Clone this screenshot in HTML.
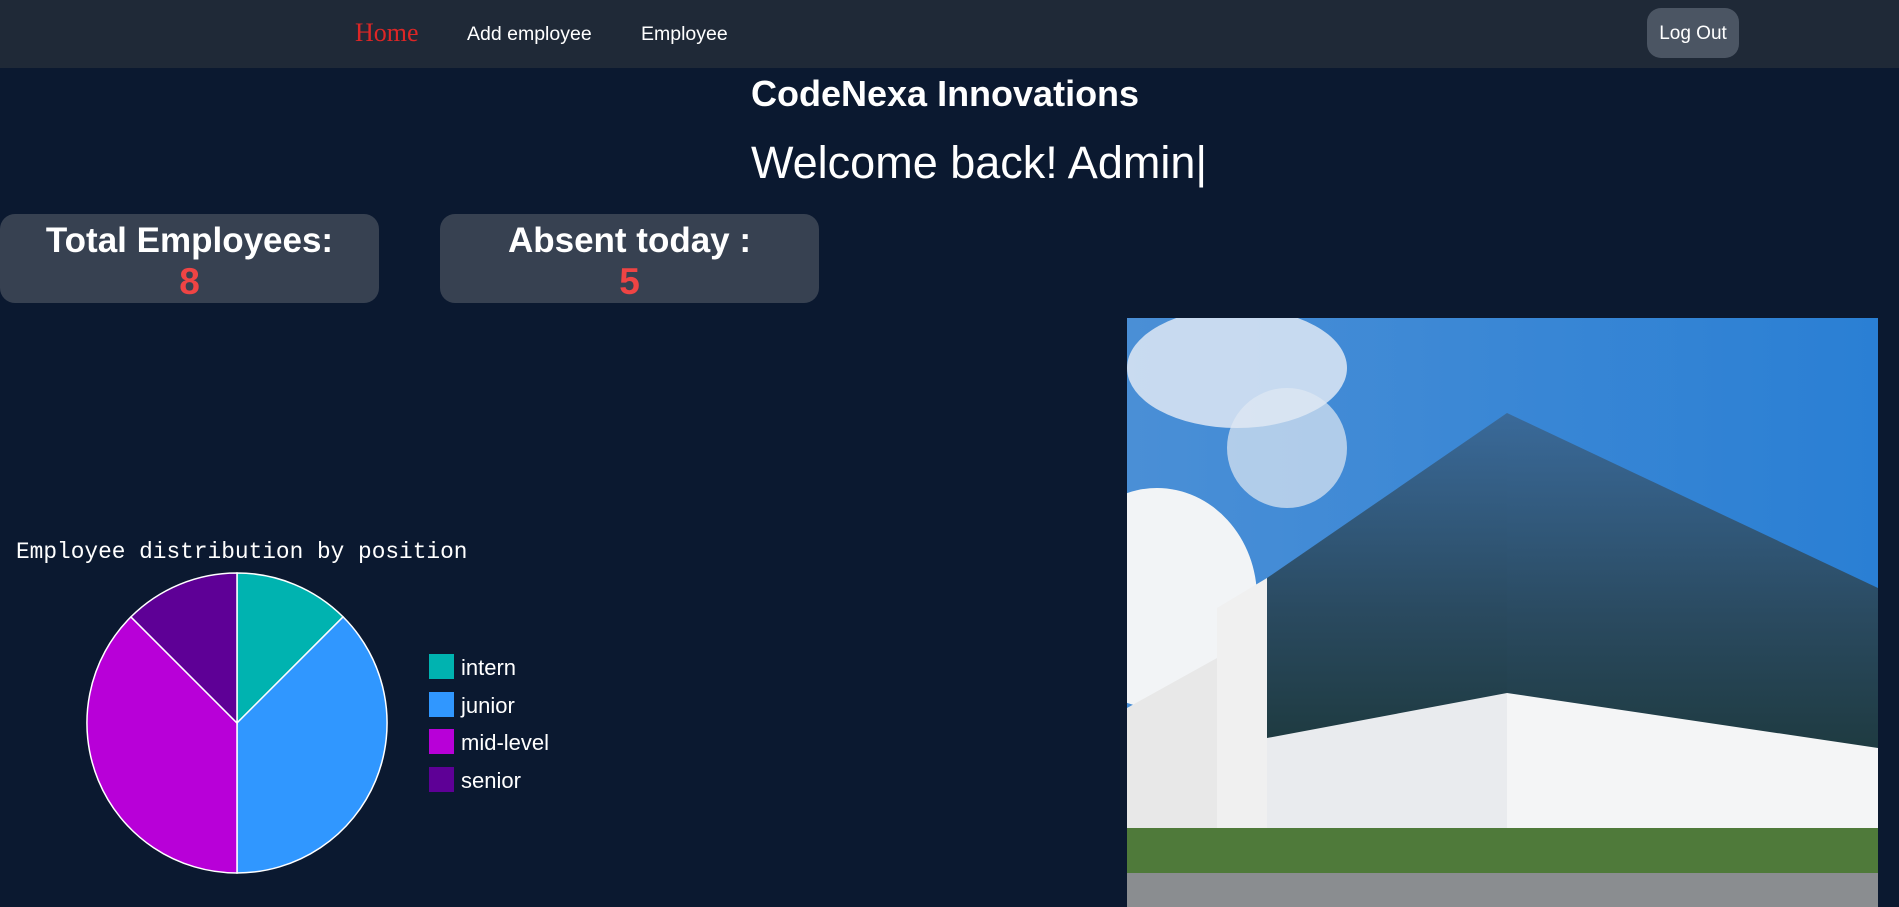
<!DOCTYPE html>
<html><head><meta charset="utf-8"><style>
*{margin:0;padding:0;box-sizing:border-box}
body{width:1899px;height:907px;background:#0b1930;font-family:"Segoe UI","Liberation Sans",sans-serif;color:#fff;position:relative;overflow:hidden}
.nav{position:absolute;left:0;top:0;width:1899px;height:68px;background:#1f2937}
.abs{position:absolute;white-space:nowrap}
.card{position:absolute;top:214px;width:379px;height:89px;background:#374151;border-radius:15px;text-align:center}
.card .t{font-weight:bold;font-size:35px;line-height:42px;margin-top:6px}
.card .n{font-weight:bold;font-size:37px;line-height:40px;color:#ef4444}
.lg{position:absolute;left:429px;width:25px;height:25px}
.lt{position:absolute;left:461px;font-family:"Liberation Sans",sans-serif;font-size:22px;line-height:25px}
</style></head><body>
<div class="nav"></div>
<div class="abs" style="left:355px;top:18px;font-family:'Liberation Serif',serif;font-size:26px;color:#dc2626">Home</div>
<div class="abs" style="left:467px;top:23px;font-size:19.5px">Add employee</div>
<div class="abs" style="left:641px;top:23px;font-size:19.5px">Employee</div>
<div class="abs" style="left:1647px;top:8px;width:92px;height:50px;background:#4b5563;border-radius:14px;font-size:19px;text-align:center;line-height:52px">Log Out</div>
<div class="abs" style="left:751px;top:71px;font-size:36px;font-weight:bold;line-height:46px">CodeNexa Innovations</div>
<div class="abs" style="left:751px;top:133px;font-size:45px;line-height:60px">Welcome back! Admin|</div>
<div class="card" style="left:0"><div class="t">Total Employees:</div><div class="n">8</div></div>
<div class="card" style="left:440px"><div class="t">Absent today :</div><div class="n">5</div></div>
<div class="abs" style="left:16px;top:539px;font-family:'Liberation Mono',monospace;font-size:22.8px">Employee distribution by position</div>
<svg class="abs" style="left:0;top:0" width="900" height="907">
<g stroke="#fff" stroke-width="1.5">
<path d="M237 723 L237 573 A150 150 0 0 1 343.1 616.9 Z" fill="#00b3b0"/>
<path d="M237 723 L343.1 616.9 A150 150 0 0 1 237 873 Z" fill="#3097ff"/>
<path d="M237 723 L237 873 A150 150 0 0 1 130.9 616.9 Z" fill="#b800d8"/>
<path d="M237 723 L130.9 616.9 A150 150 0 0 1 237 573 Z" fill="#5e0096"/>
</g></svg>
<div class="lg" style="top:654px;background:#00b3b0"></div><div class="lt" style="top:655px">intern</div>
<div class="lg" style="top:692px;background:#3097ff"></div><div class="lt" style="top:693px">junior</div>
<div class="lg" style="top:729px;background:#b800d8"></div><div class="lt" style="top:730px">mid-level</div>
<div class="lg" style="top:767px;background:#5e0096"></div><div class="lt" style="top:768px">senior</div>
<svg class="abs" style="left:1127px;top:318px" width="751" height="589" viewBox="0 0 751 589">
<defs><linearGradient id="sky" x1="0" y1="0" x2="1" y2="0"><stop offset="0" stop-color="#4a8fd6"/><stop offset="1" stop-color="#2a7fd4"/></linearGradient>
<linearGradient id="gl" x1="0" y1="0" x2="0" y2="1"><stop offset="0" stop-color="#3a6a9a"/><stop offset=".6" stop-color="#2a4a60"/><stop offset="1" stop-color="#1e3a40"/></linearGradient></defs>
<rect width="751" height="589" fill="url(#sky)"/>
<ellipse cx="110" cy="50" rx="110" ry="60" fill="#e8eef6" opacity=".8"/>
<ellipse cx="160" cy="130" rx="60" ry="60" fill="#dfe8f2" opacity=".7"/>
<ellipse cx="30" cy="280" rx="100" ry="110" fill="#f2f4f6"/>
<ellipse cx="400" cy="180" rx="70" ry="40" fill="#dfe8f2" opacity=".7"/>
<polygon points="0,390 90,340 90,540 0,560" fill="#e8e8e8"/>
<polygon points="90,290 140,260 140,540 90,540" fill="#f0f0f0"/>
<polygon points="140,260 380,95 380,380 140,425" fill="url(#gl)"/>
<polygon points="380,95 751,270 751,435 380,380" fill="url(#gl)"/>
<polygon points="140,420 380,375 380,589 140,589" fill="#e9ebee"/>
<polygon points="380,375 751,430 751,589 380,589" fill="#f4f5f6"/>
<rect x="0" y="510" width="751" height="79" fill="#4f7a3a"/>
<rect x="0" y="555" width="751" height="34" fill="#8a8d90"/>
</svg>
</body></html>
